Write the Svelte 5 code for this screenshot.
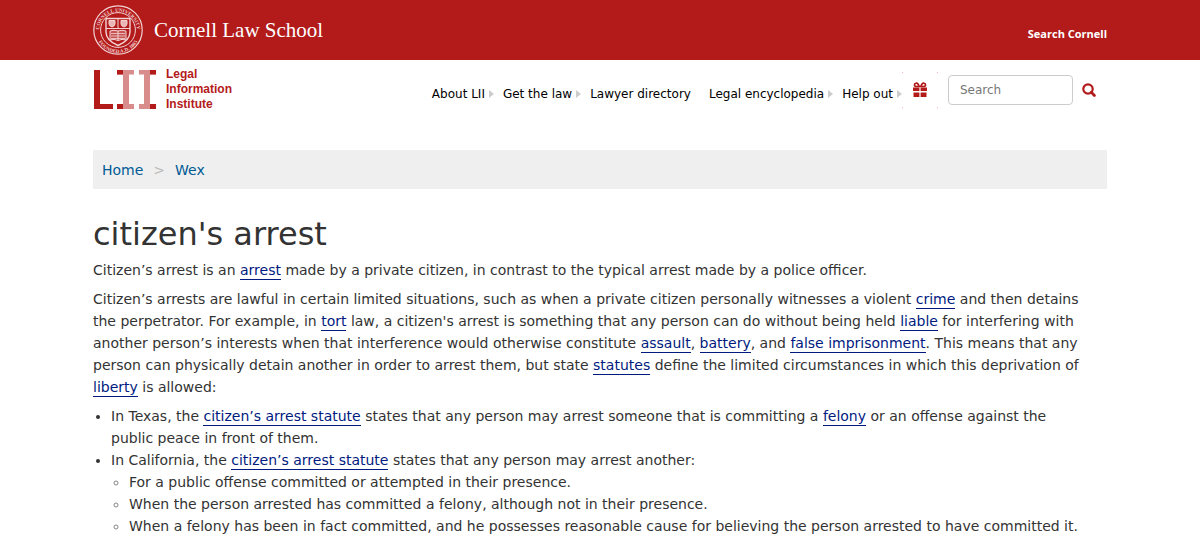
<script lang="ts">
  type NavItem = { label: string; href: string; arrow: boolean };

  const nav: NavItem[] = [
    { label: 'About LII', href: '#about', arrow: true },
    { label: 'Get the law', href: '#law', arrow: true },
    { label: 'Lawyer directory', href: '#lawyers', arrow: false },
    { label: 'Legal encyclopedia', href: '#wex', arrow: true },
    { label: 'Help out', href: '#help', arrow: true }
  ];

  let query = $state('');
</script>

<header class="brand">
  <div class="container brand-row">
    <a class="school" href="#cornell">
      <svg class="seal" viewBox="0 0 50 50" aria-hidden="true">
        <defs>
          <path id="ring-top" d="M6.5 30 A19 19 0 1 1 43.5 30" />
          <path id="ring-bottom" d="M2.7 29 A22.6 22.6 0 0 0 47.3 29" />
        </defs>
        <g fill="none" stroke="#f3d3d3">
          <circle cx="25" cy="25" r="24.2" stroke-width="1.2" />
          <circle cx="25" cy="25" r="17.4" />
          <path d="M13 13.5H37V27C37 34 31 38 25 40.5C19 38 13 34 13 27Z" stroke-width="1.4" />
          <path d="M13 23.5H37M25 13.5V23.5" />
          <path d="M16 15.5V19Q16 21 19 22Q22 21 22 19V15.5ZM28 15.5V19Q28 21 31 22Q34 21 34 19V15.5Z" fill="#e9b5b5" />
          <path d="M17 26Q21 24.5 25 26Q29 24.5 33 26V35Q29 33.5 25 35.5Q21 33.5 17 35ZM25 26V35.5" fill="#c75252" />
          <path d="M18 28.5H32M18 31H32M18 33.5H32" stroke-width=".8" />
        </g>
        <text class="seal-text"><textPath href="#ring-top" startOffset="50%" text-anchor="middle">CORNELL UNIVERSITY</textPath></text>
        <text class="seal-text"><textPath href="#ring-bottom" startOffset="50%" text-anchor="middle">FOUNDED A.D. 1865</textPath></text>
      </svg>
      <span>Cornell Law School</span>
    </a>
    <a class="search-cornell" href="#search-cornell">Search Cornell</a>
  </div>
</header>

<div class="container masthead">
  <a class="lii" href="#home">
    <svg width="63" height="40" viewBox="0 0 63 40" aria-hidden="true">
      <path d="M1 1H7V35H20V40H1Z" fill="#b31b1b" />
      <path d="M24 1H41V5.5H36V35H41V40H24V35H30V5.5H24ZM46 1H63V5.5H57V35H63V40H46V35H51V5.5H46Z" fill="#d98c8c" />
      <path d="M24 1H30V5.5H24ZM24 35H30V40H24ZM57 1H63V5.5H57ZM57 35H63V40H57Z" fill="#b31b1b" />
    </svg>
    <span>Legal<br />Information<br />Institute</span>
  </a>

  <div class="tools">
    <nav>
      {#each nav as item}
        <a class:arrow={item.arrow} href={item.href}>{item.label}</a>
      {/each}
    </nav>
    <a class="gift" href="#donate" aria-label="Donate">
      <svg width="16" height="16" viewBox="0 0 16 16" aria-hidden="true">
        <path d="M1 5.5H7.4V9H1ZM8.6 5.5H15V9H8.6ZM1.5 10.5H7.4V15H1.5ZM8.6 10.5H14.5V15H8.6Z" fill="#b31b1b" />
        <path d="M7.3 4.5L5.8 1.8C5 .7 2.5 1 2.5 2.8C2.5 4.2 3.5 4.5 4.5 4.5ZM8.7 4.5L10.2 1.8C11 .7 13.5 1 13.5 2.8C13.5 4.2 12.5 4.5 11.5 4.5Z" fill="none" stroke="#b31b1b" stroke-width="1.7" />
      </svg>
    </a>
    <form onsubmit={(e) => e.preventDefault()}>
      <input type="text" placeholder="Search" aria-label="Search" bind:value={query} />
      <button type="submit" aria-label="Submit search">
        <svg width="14" height="14" viewBox="0 0 14 14" aria-hidden="true">
          <circle cx="6" cy="6" r="4.7" fill="none" stroke="#b31b1b" stroke-width="2.2" />
          <path d="M9.3 9.3L12.4 12.4" stroke="#b31b1b" stroke-width="2.8" stroke-linecap="round" />
        </svg>
      </button>
    </form>
  </div>
</div>

<main class="container">
  <nav class="breadcrumb" aria-label="Breadcrumb">
    <a href="#home">Home</a>
    <span>&gt;</span>
    <a href="#wex">Wex</a>
  </nav>

  <article>
    <h1>citizen's arrest</h1>
    <p>Citizen’s arrest is an <a href="#arrest">arrest</a> made by a private citizen, in contrast to the typical arrest made by a police officer.</p>
    <p>
      Citizen’s arrests are lawful in certain limited situations, such as when a private citizen personally witnesses a violent <a href="#crime">crime</a> and then detains the perpetrator. For example, in <a href="#tort">tort</a> law, a citizen's arrest is something that any person can do without being held <a href="#liable">liable</a> for interfering with another person’s interests when that interference would otherwise constitute <a href="#assault">assault</a>, <a href="#battery">battery</a>, and <a href="#imprisonment">false imprisonment</a>. This means that any person can physically detain another in order to arrest them, but state <a href="#statutes">statutes</a> define the limited circumstances in which this deprivation of <a href="#liberty">liberty</a> is allowed:
    </p>
    <ul>
      <li>In Texas, the <a href="#texas">citizen’s arrest statute</a> states that any person may arrest someone that is committing a <a href="#felony">felony</a> or an offense against the public peace in front of them.</li>
      <li>
        In California, the <a href="#california">citizen’s arrest statute</a> states that any person may arrest another:
        <ul>
          <li>For a public offense committed or attempted in their presence.</li>
          <li>When the person arrested has committed a felony, although not in their presence.</li>
          <li>When a felony has been in fact committed, and he possesses reasonable cause for believing the person arrested to have committed it.</li>
        </ul>
      </li>
    </ul>
  </article>
</main>

<style>
  :global(body) {
    background: #fff;
    color: #333;
    font: 14px/22px Verdana, "DejaVu Sans", sans-serif;
  }
  a { text-decoration: none; }
  .container {
    max-width: 1014px;
    margin: 0 auto;
  }
  .brand { background: #b31b1b; }
  .brand-row {
    display: flex;
    align-items: center;
    justify-content: space-between;
    height: 60px;
  }
  .school {
    display: flex;
    align-items: center;
    gap: 11px;
    color: #fff;
    font: 21px/28px "Palatino Linotype", Palatino, "Liberation Serif", serif;
  }
  .seal { width: 50px; height: 50px; }
  .seal-text {
    fill: #f3d3d3;
    font: bold 5px "Liberation Serif", serif;
  }
  .search-cornell {
    color: #fff;
    font: bold 11px/16px "Open Sans", sans-serif;
    padding-top: 8px;
  }
  .masthead {
    display: flex;
    justify-content: space-between;
    height: 90px;
  }
  .lii {
    display: flex;
    align-items: flex-start;
    gap: 10px;
    padding-top: 9px;
    color: #b31b1b;
    font: bold 12px/15px "Liberation Sans", Arial, sans-serif;
  }
  .lii span { margin-top: -2px; }
  .tools {
    display: flex;
    align-items: center;
    height: 60px;
  }
  .tools nav {
    display: flex;
    gap: 9px;
    padding-top: 8px;
  }
  .tools nav a {
    display: flex;
    align-items: center;
    color: #000;
    font-size: 12px;
    padding-right: 9px;
  }
  .tools nav .arrow { padding-right: 0; }
  .arrow::after {
    content: "";
    margin-left: 4px;
    border-left: 5px solid #ccc;
    border-top: 4px solid transparent;
    border-bottom: 4px solid transparent;
  }
  .gift {
    --dot: linear-gradient(#f0b8c0, #f0b8c0);
    display: flex;
    align-items: center;
    justify-content: center;
    width: 36px;
    height: 36px;
    margin-right: 10px;
    background:
      var(--dot) 0 0 / 1px 1px,
      var(--dot) 100% 0 / 1px 1px,
      var(--dot) 0 100% / 1px 1px,
      var(--dot) 100% 100% / 1px 1px;
    background-repeat: no-repeat;
  }
  form {
    display: flex;
    align-items: center;
  }
  input {
    box-sizing: border-box;
    width: 125px;
    height: 30px;
    padding: 0 11px;
    border: 1px solid #ccc;
    border-radius: 4px;
    color: #555;
    font: 12px Verdana, "DejaVu Sans", sans-serif;
  }
  input::placeholder { color: #777; }
  button {
    display: flex;
    padding: 0 11px 0 9px;
    border: 0;
    background: none;
  }
  .breadcrumb {
    display: flex;
    gap: 10px;
    padding: 9px 9px 8px;
    background: #efefef;
  }
  .breadcrumb a { color: #005b94; }
  .breadcrumb span { color: #bbb; }
  h1 {
    margin: 24px 0 4px;
    font-size: 32px;
    line-height: 42px;
    font-weight: 400;
  }
  article { padding-right: 20px; }
  p { margin: 0 0 7px; }
  article a {
    color: #001a80;
    padding-bottom: 1px;
    border-bottom: 1px solid #001a80;
  }
  ul {
    margin: 0;
    padding-left: 18px;
  }
  ul ul li::marker { color: #888; }
</style>
